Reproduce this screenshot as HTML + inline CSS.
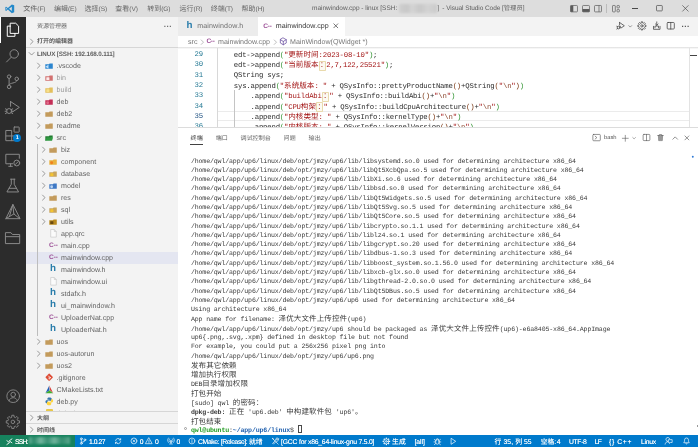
<!DOCTYPE html>
<html lang="zh-CN"><head><meta charset="utf-8"><title>mainwindow.cpp - linux - Visual Studio Code</title>
<style>
html,body{margin:0;padding:0}
body{text-rendering:geometricPrecision;width:698px;height:447px;overflow:hidden;position:relative;background:#fff;font-family:"Liberation Sans",sans-serif;font-size:7px}
#root{position:absolute;left:0;top:0;width:698px;height:447px;will-change:transform}
#root div,#root svg.a{position:absolute}
.t{white-space:nowrap}
span.cj{font-family:"Liberation Sans","Noto Sans CJK SC",sans-serif;letter-spacing:0;font-weight:normal}
span.cj.b{font-weight:bold}
span.cj.tc{letter-spacing:0.13px}
svg.a{overflow:visible;display:block}
.ln,.cl,.tm{font-family:"Liberation Mono",monospace;white-space:pre}
.ln,.cl{font-size:7.3px;letter-spacing:-0.191px;line-height:10.34px;height:10.34px;color:#2a2a2a}
.ln{text-align:right}
.tm{font-size:6.6px;letter-spacing:-0.145px;line-height:9.29px;height:9.29px;color:#3a3a3a}
.s{color:#a31515} .e{color:#8c4a32} .p2{color:#319331} .p3{color:#7b3814}
.u{position:relative;color:#a31515}
.u::after{content:'';position:absolute;left:0.2px;right:0.2px;top:-1.7px;height:10px;border:0.8px solid #e9daac;border-radius:0.8px;background:rgba(189,155,3,0.05);box-sizing:border-box}
</style></head><body>
<div id="root">
<div style="left:-6px;top:-6px;width:710px;height:22.5px;background:#dddddd"></div><svg class="a" style="left:5.4px;top:3.8px;" width="9.6" height="9.6" viewBox="0 0 100 100"><path d="M71 4 30 42 12 28 4 32v36l8 4 18-14 41 38 25-10V14z M12 60V40l10 10z M71 28v44L42 50z" fill="#2489ca" fill-rule="evenodd"/></svg><div class="t" style="left:23.3px;top:2.1px;height:16.5px;line-height:16.5px;font-size:6.8px;color:#666;letter-spacing:-0.1px"><span class="cj" style="font-size:7.0px">文件</span><span style="font-size:6.6px">(F)</span></div><div class="t" style="left:54px;top:2.1px;height:16.5px;line-height:16.5px;font-size:6.8px;color:#666;letter-spacing:-0.1px"><span class="cj" style="font-size:7.0px">编辑</span><span style="font-size:6.6px">(E)</span></div><div class="t" style="left:84.6px;top:2.1px;height:16.5px;line-height:16.5px;font-size:6.8px;color:#666;letter-spacing:-0.1px"><span class="cj" style="font-size:7.0px">选择</span><span style="font-size:6.6px">(S)</span></div><div class="t" style="left:115.3px;top:2.1px;height:16.5px;line-height:16.5px;font-size:6.8px;color:#666;letter-spacing:-0.1px"><span class="cj" style="font-size:7.0px">查看</span><span style="font-size:6.6px">(V)</span></div><div class="t" style="left:147.2px;top:2.1px;height:16.5px;line-height:16.5px;font-size:6.8px;color:#666;letter-spacing:-0.1px"><span class="cj" style="font-size:7.0px">转到</span><span style="font-size:6.6px">(G)</span></div><div class="t" style="left:179.6px;top:2.1px;height:16.5px;line-height:16.5px;font-size:6.8px;color:#666;letter-spacing:-0.1px"><span class="cj" style="font-size:7.0px">运行</span><span style="font-size:6.6px">(R)</span></div><div class="t" style="left:210.8px;top:2.1px;height:16.5px;line-height:16.5px;font-size:6.8px;color:#666;letter-spacing:-0.1px"><span class="cj" style="font-size:7.0px">终端</span><span style="font-size:6.6px">(T)</span></div><div class="t" style="left:241.6px;top:2.1px;height:16.5px;line-height:16.5px;font-size:6.8px;color:#666;letter-spacing:-0.1px"><span class="cj" style="font-size:7.0px">帮助</span><span style="font-size:6.6px">(H)</span></div><div class="t" style="left:312px;top:1.0px;height:16.5px;line-height:16.5px;font-size:6.5px;color:#606060;letter-spacing:-0.015px">mainwindow.cpp - linux [SSH:</div><div class="t" style="left:437.4px;top:1.0px;height:16.5px;line-height:16.5px;font-size:6.5px;color:#606060">]</div><div class="t" style="left:442.3px;top:1.0px;height:16.5px;line-height:16.5px;font-size:6.5px;color:#606060;letter-spacing:-0.057px">- Visual Studio Code [<span class="cj" style="font-size:6.3px">管理员</span>]</div><div style="left:399px;top:4px;width:37.5px;height:8.5px;background:linear-gradient(90deg,#cfcfcf,#c6c6c6 20%,#d3d3d3 35%,#c7c7c7 55%,#d2d2d2 75%,#cacaca);filter:blur(1.2px);opacity:.9"></div><svg class="a" style="left:570px;top:4.6px;" width="8" height="7.4" viewBox="0 0 8 7.400"><rect x="0.500" y="0.500" width="7" height="6.400" rx="0.800" fill="none" stroke="#5a5a5a" stroke-width="0.700"/><rect x="0.500" y="0.500" width="2.800" height="6.400" fill="#5a5a5a"/></svg><svg class="a" style="left:582px;top:4.6px;" width="8" height="7.4" viewBox="0 0 8 7.400"><rect x="0.500" y="0.500" width="7" height="6.400" rx="0.800" fill="none" stroke="#5a5a5a" stroke-width="0.700"/><rect x="0.500" y="4" width="7" height="2.900" fill="#5a5a5a"/></svg><svg class="a" style="left:594px;top:4.6px;" width="8" height="7.4" viewBox="0 0 8 7.400"><rect x="0.500" y="0.500" width="7" height="6.400" rx="0.800" fill="none" stroke="#5a5a5a" stroke-width="0.700"/><line x1="5" y1="0.500" x2="5" y2="6.900" stroke="#5a5a5a" stroke-width="0.700"/></svg><div style="left:606.3px;top:4px;width:0.6px;height:8.5px;background:#bcbcbc"></div><svg class="a" style="left:611.5px;top:4.6px;" width="8" height="7.4" viewBox="0 0 8 7.400"><g fill="none" stroke="#5a5a5a" stroke-width="0.700"><rect x="0.500" y="0.500" width="2.800" height="6.400" rx="0.600"/><rect x="5" y="0.500" width="2.400" height="2.400" rx="0.600"/><rect x="5" y="4.500" width="2.400" height="2.400" rx="0.600"/></g></svg><div style="left:632px;top:8.1px;width:5.8px;height:0.65px;background:#4a4a4a"></div><svg class="a" style="left:656.2px;top:5.2px;" width="6.8" height="6.4" viewBox="0 0 6.800 6.400"><rect x="0.500" y="0.500" width="5.800" height="5.400" rx="0.700" fill="none" stroke="#4a4a4a" stroke-width="0.700"/></svg><svg class="a" style="left:681.6px;top:5px;" width="6.8" height="6.8" viewBox="0 0 10 10"><path d="M0.500 0.500 9.500 9.500M9.500 0.500 0.500 9.500" stroke="#444" stroke-width="0.950" fill="none"/></svg><div style="left:-6px;top:16.5px;width:32px;height:418.0px;background:#2c2c2c"></div><div style="left:-6px;top:16.5px;width:7.1px;height:26px;background:#fff"></div><svg class="a" style="left:4.25px;top:20.55px;" width="17.5" height="17.5" viewBox="0 0 24 24"><g fill="none" stroke="#fff" stroke-width="1.35" stroke-linejoin="round" stroke-linecap="round"><path d="M9 3h7l4 4v10H9z"/><path d="M9 7H4.5v14H15v-4" /></g></svg><svg class="a" style="left:4.25px;top:46.55px;" width="17.5" height="17.5" viewBox="0 0 24 24"><g fill="none" stroke="#8a8a8a" stroke-width="1.35" stroke-linejoin="round" stroke-linecap="round"><circle cx="14" cy="9.5" r="5.8"/><path d="M10 14 3.5 20.5"/></g></svg><svg class="a" style="left:4.25px;top:72.55px;" width="17.5" height="17.5" viewBox="0 0 24 24"><g fill="none" stroke="#8a8a8a" stroke-width="1.35" stroke-linejoin="round" stroke-linecap="round"><circle cx="7" cy="5" r="2.4"/><circle cx="7" cy="19" r="2.4"/><circle cx="17.5" cy="8" r="2.4"/><path d="M7 7.5v9M17.5 10.5c0 4-10.5 2.5-10.5 6"/></g></svg><svg class="a" style="left:4.25px;top:98.55px;" width="17.5" height="17.5" viewBox="0 0 24 24"><g fill="none" stroke="#8a8a8a" stroke-width="1.35" stroke-linejoin="round" stroke-linecap="round"><path d="M9 3.5 21 11.5 12 17.5M9 3.5V10"/><circle cx="7" cy="16.5" r="3.4"/><path d="M2 13.5l2 1M2 20l2-1.2M12 13.5l-2 1M12 20l-2-1.2M3 16.8h-1.5M12.5 16.8H11"/></g></svg><svg class="a" style="left:4.25px;top:124.55000000000001px;" width="17.5" height="17.5" viewBox="0 0 24 24"><g fill="none" stroke="#8a8a8a" stroke-width="1.35" stroke-linejoin="round" stroke-linecap="round"><path d="M3 7.5h7.5V15H18v6.5H3z M10.5 15H3M10.5 15v6.5"/><rect x="13.8" y="2.8" width="7" height="7" rx="0.5"/></g></svg><div style="left:13.2px;top:134.3px;width:8.2px;height:8.2px;background:#007acc;border-radius:50%"></div><div class="t" style="left:13.2px;top:134.3px;height:8.2px;line-height:8.2px;font-size:5.6px;color:#fff;width:8.2px;text-align:center;font-weight:bold">1</div><svg class="a" style="left:4.25px;top:150.85px;" width="17.5" height="17.5" viewBox="0 0 24 24"><g fill="none" stroke="#8a8a8a" stroke-width="1.35" stroke-linejoin="round" stroke-linecap="round"><path d="M12 17.5H2.5v-13h18.5V10M6.5 21h5M9 17.5V21"/><circle cx="17.5" cy="16.5" r="4"/><path d="M15.5 18.5l4-4"/></g></svg><svg class="a" style="left:4.25px;top:176.75px;" width="17.5" height="17.5" viewBox="0 0 24 24"><g fill="none" stroke="#8a8a8a" stroke-width="1.35" stroke-linejoin="round" stroke-linecap="round"><path d="M9 3h6M10 3v7L4 20.5h16L14 10V3M7 15.5h10"/></g></svg><svg class="a" style="left:4.25px;top:202.75px;" width="17.5" height="17.5" viewBox="0 0 24 24"><g fill="none" stroke="#8a8a8a" stroke-width="1.35" stroke-linejoin="round" stroke-linecap="round"><path d="M12 2.5 2.5 21.5h19z M12 2.5l1.5 12.5 8 6.5M13.5 15 2.5 21.5 M12 2.5 7.5 18.5"/></g></svg><svg class="a" style="left:4.25px;top:229.25px;" width="17.5" height="17.5" viewBox="0 0 24 24"><g fill="none" stroke="#8a8a8a" stroke-width="1.35" stroke-linejoin="round" stroke-linecap="round"><path d="M2.5 5h7l2 2.5h10V20h-19z M2.5 10.5h19"/></g></svg><svg class="a" style="left:4.9px;top:387.8px;" width="16.4" height="16.4" viewBox="0 0 24 24"><g fill="none" stroke="#8a8a8a" stroke-width="1.35" stroke-linejoin="round" stroke-linecap="round"><circle cx="12" cy="12" r="9.3"/><circle cx="12" cy="9.6" r="3.4"/><path d="M5.800 18.800c1-3.300 3.700-4.600 6.200-4.600s5.200 1.300 6.200 4.600"/></g></svg><svg class="a" style="left:5.299999999999999px;top:414.3px;" width="15.8" height="15.8" viewBox="0 0 24 24"><g fill="none" stroke="#8a8a8a" stroke-width="1.35" stroke-linejoin="round" stroke-linecap="round"><path d="M10.17 4.62 L10.33 1.94 L13.67 1.94 L13.83 4.62 L15.92 5.49 L17.93 3.70 L20.30 6.07 L18.51 8.08 L19.38 10.17 L22.06 10.33 L22.06 13.67 L19.38 13.83 L18.51 15.92 L20.30 17.93 L17.93 20.30 L15.92 18.51 L13.83 19.38 L13.67 22.06 L10.33 22.06 L10.17 19.38 L8.08 18.51 L6.07 20.30 L3.70 17.93 L5.49 15.92 L4.62 13.83 L1.94 13.67 L1.94 10.33 L4.62 10.17 L5.49 8.08 L3.70 6.07 L6.07 3.70 L8.08 5.49z"/><circle cx="12" cy="12" r="2.7"/></g></svg><div style="left:26px;top:16.5px;width:152px;height:418.0px;background:#f3f3f3"></div><div class="t" style="left:37px;top:20.8px;height:12px;line-height:12px;color:#6a6a6a"><span class="cj" style="font-size:6.0px">资源管理器</span></div><div class="t" style="left:163.8px;top:20.8px;height:12px;line-height:12px;font-size:8px;color:#6a6a6a;letter-spacing:0.1px;font-weight:bold">···</div><svg class="a" style="left:27.7px;top:37.699999999999996px;" width="7.2" height="7.2" viewBox="0 0 8 8"><g fill="none" stroke="#777" stroke-width="0.8" stroke-linecap="round" stroke-linejoin="round"><path d="M2.800 1.200 5.600 4 2.800 6.800"/></g></svg><div class="t" style="left:37px;top:36.2px;height:12px;line-height:12px;color:#5a5a5a"><span class="cj b" style="font-size:6.0px">打开的编辑器</span></div><div style="left:26px;top:47.2px;width:152px;height:0.7px;background:#d6d6d6"></div><svg class="a" style="left:27.7px;top:50.199999999999996px;" width="7.2" height="7.2" viewBox="0 0 8 8"><g fill="none" stroke="#777" stroke-width="0.8" stroke-linecap="round" stroke-linejoin="round"><path d="M1.2 2.8 4 5.6 6.800 2.800"/></g></svg><div class="t" style="left:37px;top:49px;height:12px;line-height:12px;font-size:6.3px;font-weight:bold;color:#626262;letter-spacing:-0.14px">LINUX [SSH: 192.168.0.111]</div><div style="left:26px;top:251.5px;width:152px;height:12.0px;background:#e4e6f1"></div><div style="left:37.3px;top:143.5px;width:0.6px;height:192.0px;background:#bdbdbd"></div><svg class="a" style="left:35.199999999999996px;top:61.9px;" width="7.2" height="7.2" viewBox="0 0 8 8"><g fill="none" stroke="#777" stroke-width="0.8" stroke-linecap="round" stroke-linejoin="round"><path d="M2.800 1.200 5.600 4 2.800 6.800"/></g></svg><svg class="a" style="left:45.199999999999996px;top:62.75px;opacity:1" width="8.2" height="6.3" viewBox="0 0 8 6.150"><path d="M0.300 1.300h3.500l0.700-0.900h3.100v5.300H0.300z" fill="#2b85cf"/><path d="M0.300 3.600 3.400 1.600v4z" fill="#bfe0fa"/></svg><div class="t" style="left:56.5px;top:59.5px;height:12.0px;line-height:12.0px;font-size:7.1px;color:#636363">.vscode</div><svg class="a" style="left:35.199999999999996px;top:73.9px;" width="7.2" height="7.2" viewBox="0 0 8 8"><g fill="none" stroke="#777" stroke-width="0.8" stroke-linecap="round" stroke-linejoin="round"><path d="M2.800 1.200 5.600 4 2.800 6.800"/></g></svg><svg class="a" style="left:45.199999999999996px;top:74.75px;opacity:1" width="8.2" height="6.3" viewBox="0 0 8 6.150"><path d="M0.300 1.300h3.500l0.700-0.900h3.100v5.300H0.300z" fill="#d27170"/><rect x="1.300" y="2.300" width="3" height="2.700" rx="0.3" fill="#fbeaea"/></svg><div class="t" style="left:56.5px;top:71.5px;height:12.0px;line-height:12.0px;font-size:7.1px;color:#9c9c9c">bin</div><svg class="a" style="left:35.199999999999996px;top:85.9px;" width="7.2" height="7.2" viewBox="0 0 8 8"><g fill="none" stroke="#777" stroke-width="0.8" stroke-linecap="round" stroke-linejoin="round"><path d="M2.800 1.200 5.600 4 2.800 6.800"/></g></svg><svg class="a" style="left:45.199999999999996px;top:86.75px;opacity:1" width="8.2" height="6.3" viewBox="0 0 8 6.150"><path d="M0.300 1.300h3.500l0.700-0.900h3.100v5.300H0.300z" fill="#e3bf5c"/><rect x="1.300" y="2.300" width="3" height="2.700" rx="0.3" fill="#f7e08a"/></svg><div class="t" style="left:56.5px;top:83.5px;height:12.0px;line-height:12.0px;font-size:7.1px;color:#9c9c9c">build</div><svg class="a" style="left:35.199999999999996px;top:97.9px;" width="7.2" height="7.2" viewBox="0 0 8 8"><g fill="none" stroke="#777" stroke-width="0.8" stroke-linecap="round" stroke-linejoin="round"><path d="M2.800 1.200 5.600 4 2.800 6.800"/></g></svg><svg class="a" style="left:45.199999999999996px;top:98.75px;opacity:1" width="8.2" height="6.3" viewBox="0 0 8 6.150"><path d="M0.300 1.300h3.500l0.700-0.900h3.100v5.300H0.300z" fill="#c42f57"/><circle cx="2.600" cy="3.700" r="1.400" fill="#e06a88"/></svg><div class="t" style="left:56.5px;top:95.5px;height:12.0px;line-height:12.0px;font-size:7.1px;color:#636363">deb</div><svg class="a" style="left:35.199999999999996px;top:109.9px;" width="7.2" height="7.2" viewBox="0 0 8 8"><g fill="none" stroke="#777" stroke-width="0.8" stroke-linecap="round" stroke-linejoin="round"><path d="M2.800 1.200 5.600 4 2.800 6.800"/></g></svg><svg class="a" style="left:45.199999999999996px;top:110.75px;opacity:1" width="8.2" height="6.3" viewBox="0 0 8 6.150"><path d="M0.300 1.300h3.500l0.700-0.900h3.100v5.300H0.300z" fill="#c39b5c"/></svg><div class="t" style="left:56.5px;top:107.5px;height:12.0px;line-height:12.0px;font-size:7.1px;color:#636363">deb2</div><svg class="a" style="left:35.199999999999996px;top:121.9px;" width="7.2" height="7.2" viewBox="0 0 8 8"><g fill="none" stroke="#777" stroke-width="0.8" stroke-linecap="round" stroke-linejoin="round"><path d="M2.800 1.200 5.600 4 2.800 6.800"/></g></svg><svg class="a" style="left:45.199999999999996px;top:122.75px;opacity:1" width="8.2" height="6.3" viewBox="0 0 8 6.150"><path d="M0.300 1.300h3.500l0.700-0.900h3.100v5.300H0.300z" fill="#c39b5c"/></svg><div class="t" style="left:56.5px;top:119.5px;height:12.0px;line-height:12.0px;font-size:7.1px;color:#636363">readme</div><svg class="a" style="left:35.199999999999996px;top:133.9px;" width="7.2" height="7.2" viewBox="0 0 8 8"><g fill="none" stroke="#777" stroke-width="0.8" stroke-linecap="round" stroke-linejoin="round"><path d="M1.2 2.8 4 5.6 6.800 2.800"/></g></svg><svg class="a" style="left:45.199999999999996px;top:134.75px;opacity:1" width="8.2" height="6.3" viewBox="0 0 8 6.150"><path d="M0.300 5.700V1.300h3.400l0.700-0.900h3.100v1.800" fill="#217a31"/><path d="M0.300 5.700 1.500 2.100h6.400L6.900 5.700z" fill="#2f9a41"/></svg><div class="t" style="left:56.5px;top:131.5px;height:12.0px;line-height:12.0px;font-size:7.1px;color:#636363">src</div><svg class="a" style="left:39.5px;top:145.9px;" width="7.2" height="7.2" viewBox="0 0 8 8"><g fill="none" stroke="#777" stroke-width="0.8" stroke-linecap="round" stroke-linejoin="round"><path d="M2.800 1.200 5.600 4 2.800 6.800"/></g></svg><svg class="a" style="left:49.199999999999996px;top:146.75px;opacity:1" width="8.2" height="6.3" viewBox="0 0 8 6.150"><path d="M0.300 1.300h3.500l0.700-0.900h3.100v5.300H0.300z" fill="#c39b5c"/></svg><div class="t" style="left:61px;top:143.5px;height:12.0px;line-height:12.0px;font-size:7.1px;color:#636363">biz</div><svg class="a" style="left:39.5px;top:157.9px;" width="7.2" height="7.2" viewBox="0 0 8 8"><g fill="none" stroke="#777" stroke-width="0.8" stroke-linecap="round" stroke-linejoin="round"><path d="M2.800 1.200 5.600 4 2.800 6.800"/></g></svg><svg class="a" style="left:49.199999999999996px;top:158.75px;opacity:1" width="8.2" height="6.3" viewBox="0 0 8 6.150"><path d="M0.300 1.300h3.500l0.700-0.900h3.100v5.300H0.300z" fill="#e9b23f"/><circle cx="2.600" cy="3.700" r="1.400" fill="#f07f1c"/></svg><div class="t" style="left:61px;top:155.5px;height:12.0px;line-height:12.0px;font-size:7.1px;color:#636363">component</div><svg class="a" style="left:39.5px;top:169.9px;" width="7.2" height="7.2" viewBox="0 0 8 8"><g fill="none" stroke="#777" stroke-width="0.8" stroke-linecap="round" stroke-linejoin="round"><path d="M2.800 1.200 5.600 4 2.800 6.800"/></g></svg><svg class="a" style="left:49.199999999999996px;top:170.75px;opacity:1" width="8.2" height="6.3" viewBox="0 0 8 6.150"><path d="M0.300 1.300h3.500l0.700-0.900h3.100v5.300H0.300z" fill="#c9a55c"/><rect x="1.300" y="2.300" width="3" height="2.700" rx="0.3" fill="#f4c430"/></svg><div class="t" style="left:61px;top:167.5px;height:12.0px;line-height:12.0px;font-size:7.1px;color:#636363">database</div><svg class="a" style="left:39.5px;top:181.9px;" width="7.2" height="7.2" viewBox="0 0 8 8"><g fill="none" stroke="#777" stroke-width="0.8" stroke-linecap="round" stroke-linejoin="round"><path d="M2.800 1.200 5.600 4 2.800 6.800"/></g></svg><svg class="a" style="left:49.199999999999996px;top:182.75px;opacity:1" width="8.2" height="6.3" viewBox="0 0 8 6.150"><path d="M0.300 1.300h3.500l0.700-0.900h3.100v5.300H0.300z" fill="#3e78c4"/><circle cx="2.600" cy="3.700" r="1.400" fill="#b9d3f2"/></svg><div class="t" style="left:61px;top:179.5px;height:12.0px;line-height:12.0px;font-size:7.1px;color:#636363">model</div><svg class="a" style="left:39.5px;top:193.9px;" width="7.2" height="7.2" viewBox="0 0 8 8"><g fill="none" stroke="#777" stroke-width="0.8" stroke-linecap="round" stroke-linejoin="round"><path d="M2.800 1.200 5.600 4 2.800 6.800"/></g></svg><svg class="a" style="left:49.199999999999996px;top:194.75px;opacity:1" width="8.2" height="6.3" viewBox="0 0 8 6.150"><path d="M0.300 1.300h3.500l0.700-0.900h3.100v5.300H0.300z" fill="#c39b5c"/></svg><div class="t" style="left:61px;top:191.5px;height:12.0px;line-height:12.0px;font-size:7.1px;color:#636363">res</div><svg class="a" style="left:39.5px;top:205.9px;" width="7.2" height="7.2" viewBox="0 0 8 8"><g fill="none" stroke="#777" stroke-width="0.8" stroke-linecap="round" stroke-linejoin="round"><path d="M2.800 1.200 5.600 4 2.800 6.800"/></g></svg><svg class="a" style="left:49.199999999999996px;top:206.75px;opacity:1" width="8.2" height="6.3" viewBox="0 0 8 6.150"><path d="M0.300 1.300h3.500l0.700-0.900h3.100v5.300H0.300z" fill="#c9a55c"/><rect x="1.300" y="2.300" width="3" height="2.700" rx="0.3" fill="#f4c430"/></svg><div class="t" style="left:61px;top:203.5px;height:12.0px;line-height:12.0px;font-size:7.1px;color:#636363">sql</div><svg class="a" style="left:39.5px;top:217.9px;" width="7.2" height="7.2" viewBox="0 0 8 8"><g fill="none" stroke="#777" stroke-width="0.8" stroke-linecap="round" stroke-linejoin="round"><path d="M2.800 1.200 5.600 4 2.800 6.800"/></g></svg><svg class="a" style="left:49.199999999999996px;top:218.75px;opacity:1" width="8.2" height="6.3" viewBox="0 0 8 6.150"><path d="M0.300 1.300h3.500l0.700-0.900h3.100v5.300H0.300z" fill="#b98a1e"/><rect x="1.300" y="2.300" width="3" height="2.700" rx="0.3" fill="#6b4a10"/></svg><div class="t" style="left:61px;top:215.5px;height:12.0px;line-height:12.0px;font-size:7.1px;color:#636363">utils</div><svg class="a" style="left:49.599999999999994px;top:229.2px;" width="7" height="8.6" viewBox="0 0 7 8.6"><path d="M0.700 0.500h3.600l2 2v5.600H0.700z M4.300 0.500v2h2" fill="#fbfbfb" stroke="#c2c2c2" stroke-width="0.6"/></svg><div class="t" style="left:61px;top:227.5px;height:12.0px;line-height:12.0px;font-size:7.1px;color:#636363">app.qrc</div><div class="t" style="left:47.8px;top:240.4px;height:12px;line-height:12px;font-size:6.6px;font-weight:bold;color:#9b4f96;width:11px;text-align:center">C<svg width="3.700" height="2.600" viewBox="0 0 8.600 6" style="display:inline-block;vertical-align:0.08em;margin-left:0.2px;overflow:visible"><path d="M0.300 3h3.400M2 1.300v3.400M4.900 3h3.400M6.600 1.300v3.400" stroke="#9b4f96" stroke-width="1.25" fill="none"/></svg></div><div class="t" style="left:61px;top:239.5px;height:12.0px;line-height:12.0px;font-size:7.1px;color:#636363">main.cpp</div><div class="t" style="left:47.8px;top:252.4px;height:12px;line-height:12px;font-size:6.6px;font-weight:bold;color:#9b4f96;width:11px;text-align:center">C<svg width="3.700" height="2.600" viewBox="0 0 8.600 6" style="display:inline-block;vertical-align:0.08em;margin-left:0.2px;overflow:visible"><path d="M0.300 3h3.400M2 1.300v3.400M4.900 3h3.400M6.600 1.300v3.400" stroke="#9b4f96" stroke-width="1.25" fill="none"/></svg></div><div class="t" style="left:61px;top:251.5px;height:12.0px;line-height:12.0px;font-size:7.1px;color:#636363">mainwindow.cpp</div><div class="t" style="left:48.099999999999994px;top:263.3px;height:12px;line-height:12px;font-size:9.8px;font-weight:bold;color:#2a7dab;width:10px;text-align:center">h</div><div class="t" style="left:61px;top:263.5px;height:12.0px;line-height:12.0px;font-size:7.1px;color:#636363">mainwindow.h</div><svg class="a" style="left:49.599999999999994px;top:277.2px;" width="7" height="8.6" viewBox="0 0 7 8.6"><path d="M0.700 0.500h3.600l2 2v5.600H0.700z M4.300 0.500v2h2" fill="#fbfbfb" stroke="#c2c2c2" stroke-width="0.6"/></svg><div class="t" style="left:61px;top:275.5px;height:12.0px;line-height:12.0px;font-size:7.1px;color:#636363">mainwindow.ui</div><div class="t" style="left:48.099999999999994px;top:287.3px;height:12px;line-height:12px;font-size:9.8px;font-weight:bold;color:#2a7dab;width:10px;text-align:center">h</div><div class="t" style="left:61px;top:287.5px;height:12.0px;line-height:12.0px;font-size:7.1px;color:#636363">stdafx.h</div><div class="t" style="left:48.099999999999994px;top:299.3px;height:12px;line-height:12px;font-size:9.8px;font-weight:bold;color:#2a7dab;width:10px;text-align:center">h</div><div class="t" style="left:61px;top:299.5px;height:12.0px;line-height:12.0px;font-size:7.1px;color:#636363">ui_mainwindow.h</div><div class="t" style="left:47.8px;top:312.4px;height:12px;line-height:12px;font-size:6.6px;font-weight:bold;color:#9b4f96;width:11px;text-align:center">C<svg width="3.700" height="2.600" viewBox="0 0 8.600 6" style="display:inline-block;vertical-align:0.08em;margin-left:0.2px;overflow:visible"><path d="M0.300 3h3.400M2 1.300v3.400M4.900 3h3.400M6.600 1.300v3.400" stroke="#9b4f96" stroke-width="1.25" fill="none"/></svg></div><div class="t" style="left:61px;top:311.5px;height:12.0px;line-height:12.0px;font-size:7.1px;color:#636363">UploaderNat.cpp</div><div class="t" style="left:48.099999999999994px;top:323.3px;height:12px;line-height:12px;font-size:9.8px;font-weight:bold;color:#2a7dab;width:10px;text-align:center">h</div><div class="t" style="left:61px;top:323.5px;height:12.0px;line-height:12.0px;font-size:7.1px;color:#636363">UploaderNat.h</div><svg class="a" style="left:35.199999999999996px;top:337.9px;" width="7.2" height="7.2" viewBox="0 0 8 8"><g fill="none" stroke="#777" stroke-width="0.8" stroke-linecap="round" stroke-linejoin="round"><path d="M2.800 1.200 5.600 4 2.800 6.800"/></g></svg><svg class="a" style="left:45.199999999999996px;top:338.75px;opacity:1" width="8.2" height="6.3" viewBox="0 0 8 6.150"><path d="M0.300 1.300h3.500l0.700-0.900h3.100v5.300H0.300z" fill="#c39b5c"/></svg><div class="t" style="left:56.5px;top:335.5px;height:12.0px;line-height:12.0px;font-size:7.1px;color:#636363">uos</div><svg class="a" style="left:35.199999999999996px;top:349.9px;" width="7.2" height="7.2" viewBox="0 0 8 8"><g fill="none" stroke="#777" stroke-width="0.8" stroke-linecap="round" stroke-linejoin="round"><path d="M2.800 1.200 5.600 4 2.800 6.800"/></g></svg><svg class="a" style="left:45.199999999999996px;top:350.75px;opacity:1" width="8.2" height="6.3" viewBox="0 0 8 6.150"><path d="M0.300 1.300h3.500l0.700-0.900h3.100v5.300H0.300z" fill="#c39b5c"/></svg><div class="t" style="left:56.5px;top:347.5px;height:12.0px;line-height:12.0px;font-size:7.1px;color:#636363">uos-autorun</div><svg class="a" style="left:35.199999999999996px;top:361.9px;" width="7.2" height="7.2" viewBox="0 0 8 8"><g fill="none" stroke="#777" stroke-width="0.8" stroke-linecap="round" stroke-linejoin="round"><path d="M2.800 1.200 5.600 4 2.800 6.800"/></g></svg><svg class="a" style="left:45.199999999999996px;top:362.75px;opacity:1" width="8.2" height="6.3" viewBox="0 0 8 6.150"><path d="M0.300 1.300h3.500l0.700-0.900h3.100v5.300H0.300z" fill="#c39b5c"/></svg><div class="t" style="left:56.5px;top:359.5px;height:12.0px;line-height:12.0px;font-size:7.1px;color:#636363">uos2</div><svg class="a" style="left:45.099999999999994px;top:373.3px;" width="8.4" height="8.4" viewBox="0 0 10 10"><rect x="1.700" y="1.700" width="6.600" height="6.600" rx="0.8" transform="rotate(45 5 5)" fill="#dd4c35"/><path d="M3.800 3.200 6 5.400M5 4.400V7" stroke="#fff" stroke-width="0.8" fill="none"/><circle cx="5" cy="7" r="0.700" fill="#fff"/><circle cx="6.300" cy="5.600" r="0.700" fill="#fff"/></svg><div class="t" style="left:56.5px;top:371.5px;height:12.0px;line-height:12.0px;font-size:7.1px;color:#636363">.gitignore</div><svg class="a" style="left:45.0px;top:385.2px;" width="8.6" height="8.6" viewBox="0 0 10 10"><path d="M5 0.500 0.500 9.500 5.300 6z" fill="#1f5fb8"/><path d="M5 0.500 9.500 9.500 5.800 6.500z" fill="#d8322b"/><path d="M0.500 9.500h9L5.500 6.200z" fill="#3eae2b"/><path d="M5 0.500 5.600 6.400 9.500 9.500" fill="none" stroke="#ddd" stroke-width="0.4"/></svg><div class="t" style="left:56.5px;top:383.5px;height:12.0px;line-height:12.0px;font-size:7.1px;color:#636363">CMakeLists.txt</div><svg class="a" style="left:45.0px;top:397.2px;" width="8.6" height="8.6" viewBox="0 0 10 10"><path d="M4.900 0.500C3 0.500 2.800 1.300 2.800 2v1.200h2.300v0.500H1.900C1 3.700 0.500 4.500 0.500 5.500s0.500 1.800 1.400 1.800h0.900V6c0-0.900 0.800-1.600 1.700-1.600h2.100c0.700 0 1.200-0.500 1.200-1.200V2c0-0.800-0.700-1.500-2.900-1.500z" fill="#3776ab"/><path d="M5.100 9.500c1.900 0 2.100-0.800 2.100-1.500V6.800H4.900V6.300h3.200c0.900 0 1.400-0.800 1.400-1.800S9 2.700 8.100 2.700H7.200V4c0 0.900-0.800 1.600-1.700 1.600H3.400c-0.700 0-1.200 0.500-1.200 1.200V8c0 0.800 0.700 1.500 2.900 1.500z" fill="#ffd43b"/></svg><div class="t" style="left:56.5px;top:395.5px;height:12.0px;line-height:12.0px;font-size:7.1px;color:#636363">deb.py</div><div style="left:26px;top:411.2px;width:152px;height:24px;background:#f3f3f3"></div><div style="left:26px;top:411px;width:152px;height:0.7px;background:#d6d6d6"></div><svg class="a" style="left:27.7px;top:414.2px;" width="7.2" height="7.2" viewBox="0 0 8 8"><g fill="none" stroke="#777" stroke-width="0.8" stroke-linecap="round" stroke-linejoin="round"><path d="M2.800 1.200 5.600 4 2.800 6.800"/></g></svg><div class="t" style="left:37px;top:412.8px;height:12px;line-height:12px;color:#5a5a5a"><span class="cj b" style="font-size:6.0px">大纲</span></div><div style="left:26px;top:423.2px;width:152px;height:0.7px;background:#d6d6d6"></div><svg class="a" style="left:27.7px;top:426.2px;" width="7.2" height="7.2" viewBox="0 0 8 8"><g fill="none" stroke="#777" stroke-width="0.8" stroke-linecap="round" stroke-linejoin="round"><path d="M2.800 1.200 5.600 4 2.800 6.800"/></g></svg><div class="t" style="left:37px;top:424.8px;height:12px;line-height:12px;color:#5a5a5a"><span class="cj b" style="font-size:6.0px">时间线</span></div><div style="left:45.5px;top:408.6px;width:7px;height:2.4px;background:#e8c84a;border-radius:1px 1px 0 0"></div><div class="t" style="left:56.5px;top:407.5px;height:12px;line-height:12px;font-size:7.1px;color:#5c5c5c;height:3.5px;overflow:hidden">deb.sh</div><div style="left:178px;top:16.5px;width:526px;height:19px;background:#f3f3f3"></div><div style="left:178px;top:16.5px;width:79.5px;height:19px;background:#ececec"></div><div style="left:257.5px;top:16.5px;width:0.6px;height:19px;background:#f3f3f3"></div><div style="left:258px;top:16.5px;width:87px;height:19px;background:#fff"></div><div class="t" style="left:184.5px;top:20.0px;height:12px;line-height:12px;font-size:9.8px;font-weight:bold;color:#2a7dab;width:10px;text-align:center">h</div><div class="t" style="left:197.2px;top:17.2px;height:19px;line-height:19px;font-size:7.1px;color:#6f6f6f;letter-spacing:0.13px">mainwindow.h</div><div class="t" style="left:262.2px;top:21.1px;height:12px;line-height:12px;font-size:6.6px;font-weight:bold;color:#9b4f96;width:11px;text-align:center">C<svg width="3.700" height="2.600" viewBox="0 0 8.600 6" style="display:inline-block;vertical-align:0.08em;margin-left:0.2px;overflow:visible"><path d="M0.300 3h3.400M2 1.300v3.400M4.900 3h3.400M6.600 1.300v3.400" stroke="#9b4f96" stroke-width="1.25" fill="none"/></svg></div><div class="t" style="left:275.7px;top:17.2px;height:19px;line-height:19px;font-size:7.1px;color:#333;letter-spacing:0.08px">mainwindow.cpp</div><svg class="a" style="left:333.2px;top:23.3px;" width="5.6" height="5.6" viewBox="0 0 10 10"><path d="M1 1 9 9M9 1 1 9" stroke="#444" stroke-width="1.3" fill="none"/></svg><svg class="a" style="left:616.25px;top:21.25px;" width="9.5" height="9.5" viewBox="0 0 16 16"><g fill="none" stroke="#424242" stroke-width="1.3" stroke-linejoin="round" stroke-linecap="round"><path d="M6 2.500 14 8 8.500 11.800M6 2.500V7"/><circle cx="4.500" cy="11" r="2.300"/><path d="M1.300 9l1.400 0.700M1.300 13.500l1.400-0.800M7.700 9l-1.400 0.700"/></g></svg><svg class="a" style="left:627.15px;top:23.05px;" width="6.5" height="6.5" viewBox="0 0 16 16"><g fill="none" stroke="#424242" stroke-width="1.3" stroke-linejoin="round" stroke-linecap="round"><path d="M4.500 6.500 8 10 11.500 6.500"/></g></svg><svg class="a" style="left:637.4px;top:21.1px;" width="9.8" height="9.8" viewBox="0 0 16 16"><g fill="none" stroke="#424242" stroke-width="1.2" stroke-linejoin="round" stroke-linecap="round"><path d="M6.79 3.15 L6.88 1.29 L9.12 1.29 L9.21 3.15 L10.58 3.72 L11.95 2.47 L13.53 4.05 L12.28 5.42 L12.85 6.79 L14.71 6.88 L14.71 9.12 L12.85 9.21 L12.28 10.58 L13.53 11.95 L11.95 13.53 L10.58 12.28 L9.21 12.85 L9.12 14.71 L6.88 14.71 L6.79 12.85 L5.42 12.28 L4.05 13.53 L2.47 11.95 L3.72 10.58 L3.15 9.21 L1.29 9.12 L1.29 6.88 L3.15 6.79 L3.72 5.42 L2.47 4.05 L4.05 2.47 L5.42 3.72z"/><circle cx="8" cy="8" r="1.900"/></g></svg><svg class="a" style="left:651.75px;top:21.25px;" width="9.5" height="9.5" viewBox="0 0 16 16"><g fill="none" stroke="#424242" stroke-width="1.3" stroke-linejoin="round" stroke-linecap="round"><path d="M2.500 9v5h11V9M8 1.500V7M5.800 5 8 7.200 10.200 5"/><path d="M5 11.500V8.500h6v3" /></g></svg><svg class="a" style="left:665.85px;top:21.25px;" width="9.5" height="9.5" viewBox="0 0 16 16"><g fill="none" stroke="#424242" stroke-width="1.3" stroke-linejoin="round" stroke-linecap="round"><rect x="2" y="2.500" width="12" height="11" rx="1.500"/><path d="M8 2.500v11"/></g></svg><div class="t" style="left:681.6px;top:20.8px;height:12px;line-height:12px;font-size:8px;color:#505050;letter-spacing:0.1px;font-weight:bold">···</div><div style="left:178px;top:35.5px;width:526px;height:12px;background:#fff"></div><div class="t" style="left:188px;top:35.5px;height:12px;line-height:12px;font-size:7.1px;color:#767676">src</div><svg class="a" style="left:198.5px;top:38.599999999999994px;" width="6.4" height="6.4" viewBox="0 0 8 8"><g fill="none" stroke="#999" stroke-width="0.8" stroke-linecap="round" stroke-linejoin="round"><path d="M2.800 1.200 5.600 4 2.800 6.800"/></g></svg><div class="t" style="left:205.29999999999998px;top:36.4px;height:12px;line-height:12px;font-size:6.6px;font-weight:bold;color:#9b4f96;width:11px;text-align:center">C<svg width="3.700" height="2.600" viewBox="0 0 8.600 6" style="display:inline-block;vertical-align:0.08em;margin-left:0.2px;overflow:visible"><path d="M0.300 3h3.400M2 1.300v3.400M4.900 3h3.400M6.600 1.300v3.400" stroke="#9b4f96" stroke-width="1.25" fill="none"/></svg></div><div class="t" style="left:218px;top:35.5px;height:12px;line-height:12px;font-size:7.1px;color:#767676">mainwindow.cpp</div><svg class="a" style="left:272.2px;top:38.599999999999994px;" width="6.4" height="6.4" viewBox="0 0 8 8"><g fill="none" stroke="#999" stroke-width="0.8" stroke-linecap="round" stroke-linejoin="round"><path d="M2.800 1.200 5.600 4 2.800 6.800"/></g></svg><svg class="a" style="left:278.7px;top:37.300000000000004px;" width="8.6" height="8.6" viewBox="0 0 16 16"><g fill="none" stroke="#6a4fa0" stroke-width="1.4" stroke-linejoin="round" stroke-linecap="round"><path d="M8 1.800 13.500 5v6.200L8 14.400 2.500 11.200V5z M2.500 5 8 8.200 13.500 5M8 8.200v6.200"/></g></svg><div class="t" style="left:290px;top:35.5px;height:12px;line-height:12px;font-size:7.1px;color:#767676">MainWindow(QWidget *)</div><div style="left:178px;top:47.3px;width:526px;height:2.2px;background:linear-gradient(#dddddd,rgba(255,255,255,0))"></div><div style="left:178px;top:47.5px;width:520px;height:80.0px;overflow:hidden"><div style="left:39px;top:63.14px;width:472.5px;height:10.34px;border-top:1.1px solid #ebebeb;border-bottom:1.1px solid #ebebeb;box-sizing:border-box"></div><div style="left:39.099999999999994px;top:0px;width:0.6px;height:80.0px;background:#d8d8d8"></div><div style="left:55.65999999999998px;top:42.46000000000001px;width:1.0px;height:80.0px;background:#c4c4c4"></div><div class="ln" style="left:12px;top:2.5px;width:13px;color:#237893">29</div><div class="cl" style="left:39px;top:2.5px">    edt-&gt;append<span class="p2">(</span><span class="s">"<span class="cj" style="font-size:7.6px">更新时间</span>:2023-08-10"</span><span class="p2">)</span>;</div><div class="ln" style="left:12px;top:12.840000000000003px;width:13px;color:#237893">30</div><div class="cl" style="left:39px;top:12.840000000000003px">    edt-&gt;append<span class="p2">(</span><span class="s">"<span class="cj" style="font-size:7.6px">当前版本</span></span><span class="u"><span class="cj" style="font-size:7.6px;position:relative;left:1.5px">：</span></span><span class="s">2,7,122,25521"</span><span class="p2">)</span>;</div><div class="ln" style="left:12px;top:23.180000000000007px;width:13px;color:#237893">31</div><div class="cl" style="left:39px;top:23.180000000000007px">    QString sys;</div><div class="ln" style="left:12px;top:33.519999999999996px;width:13px;color:#237893">32</div><div class="cl" style="left:39px;top:33.519999999999996px">    sys.append<span class="p2">(</span><span class="s">"<span class="cj" style="font-size:7.6px">系统版本</span>: "</span> + QSysInfo::prettyProductName<span class="p3">()</span>+QString<span class="p3">(</span><span class="s">"</span><span class="e">\n</span><span class="s">"</span><span class="p3">)</span><span class="p2">)</span></div><div class="ln" style="left:12px;top:43.86px;width:13px;color:#237893">33</div><div class="cl" style="left:39px;top:43.86px">        .append<span class="p2">(</span><span class="s">"buildAbi</span><span class="u"><span class="cj" style="font-size:7.6px;position:relative;left:1.5px">：</span></span><span class="s">"</span> + QSysInfo::buildAbi<span class="p3">()</span>+<span class="s">"</span><span class="e">\n</span><span class="s">"</span><span class="p2">)</span></div><div class="ln" style="left:12px;top:54.2px;width:13px;color:#237893">34</div><div class="cl" style="left:39px;top:54.2px">        .append<span class="p2">(</span><span class="s">"CPU<span class="cj" style="font-size:7.6px">构架</span></span><span class="u"><span class="cj" style="font-size:7.6px;position:relative;left:1.5px">：</span></span><span class="s">"</span> + QSysInfo::buildCpuArchitecture<span class="p3">()</span>+<span class="s">"</span><span class="e">\n</span><span class="s">"</span><span class="p2">)</span></div><div class="ln" style="left:12px;top:64.53999999999999px;width:13px;color:#1d4f80">35</div><div class="cl" style="left:39px;top:64.53999999999999px">        .append<span class="p2">(</span><span class="s">"<span class="cj" style="font-size:7.6px">内核类型</span>: "</span> + QSysInfo::kernelType<span class="p3">()</span>+<span class="s">"</span><span class="e">\n</span><span class="s">"</span><span class="p2">)</span></div><div class="ln" style="left:12px;top:74.88px;width:13px;color:#237893">36</div><div class="cl" style="left:39px;top:74.88px">        .append<span class="p2">(</span><span class="s">"<span class="cj" style="font-size:7.6px">内核版本</span>: "</span> + QSysInfo::kernelVersion<span class="p3">()</span>+<span class="s">"</span><span class="e">\n</span><span class="s">"</span><span class="p2">)</span></div></div><div style="left:689.4px;top:47.5px;width:0.6px;height:80.0px;background:#e3e3e3"></div><div style="left:690.3px;top:55.2px;width:7.2px;height:1.1px;background:#444"></div><div style="left:178px;top:127.5px;width:526px;height:307.0px;background:#fff"></div><div style="left:178px;top:127.2px;width:526px;height:0.7px;background:#dcdcdc"></div><div class="t" style="left:190.6px;top:132.8px;height:12px;line-height:12px;color:#424242"><span class="cj" style="font-size:6.05px">终端</span></div><div class="t" style="left:215.8px;top:132.8px;height:12px;line-height:12px;color:#646464"><span class="cj" style="font-size:6.05px">端口</span></div><div class="t" style="left:240.6px;top:132.8px;height:12px;line-height:12px;color:#646464"><span class="cj" style="font-size:6.05px">调试控制台</span></div><div class="t" style="left:283.6px;top:132.8px;height:12px;line-height:12px;color:#646464"><span class="cj" style="font-size:6.05px">问题</span></div><div class="t" style="left:308.6px;top:132.8px;height:12px;line-height:12px;color:#646464"><span class="cj" style="font-size:6.05px">输出</span></div><div style="left:190.2px;top:144.4px;width:13px;height:0.8px;background:#424242"></div><svg class="a" style="left:591.9px;top:133.20000000000002px;" width="9.2" height="9.2" viewBox="0 0 16 16"><g fill="none" stroke="#555" stroke-width="1.1" stroke-linejoin="round" stroke-linecap="round"><rect x="1.500" y="2.500" width="13" height="11" rx="1.500"/><path d="M5.500 5.500 8.500 8 5.500 10.500"/></g></svg><div class="t" style="left:604px;top:131.8px;height:12px;line-height:12px;font-size:5.8px;color:#555">bash</div><svg class="a" style="left:620.7px;top:133.5px;" width="8.6" height="8.6" viewBox="0 0 16 16"><g fill="none" stroke="#555" stroke-width="1.1" stroke-linejoin="round" stroke-linecap="round"><path d="M8 2.500v11M2.500 8h11"/></g></svg><svg class="a" style="left:631.1999999999999px;top:135.00000000000003px;" width="6.2" height="6.2" viewBox="0 0 16 16"><g fill="none" stroke="#555" stroke-width="1.3" stroke-linejoin="round" stroke-linecap="round"><path d="M4.500 6.500 8 10 11.500 6.500"/></g></svg><svg class="a" style="left:642.4px;top:133.3px;" width="9" height="9" viewBox="0 0 16 16"><g fill="none" stroke="#555" stroke-width="1.1" stroke-linejoin="round" stroke-linecap="round"><rect x="2" y="2.500" width="12" height="11" rx="1.500"/><path d="M8 2.500v11"/></g></svg><svg class="a" style="left:656.0px;top:133.3px;" width="9" height="9" viewBox="0 0 16 16"><g fill="none" stroke="#555" stroke-width="1.1" stroke-linejoin="round" stroke-linecap="round"><path d="M3 4.500h10M6 4.500V2.800h4V4.500M4.300 4.500 4.800 13.500h6.400L11.700 4.500" /><path d="M6.600 6.500v5M9.400 6.500v5"/><path d="M5 5h6v8H5z" fill="#999" stroke="none"/></g></svg><svg class="a" style="left:671.0px;top:133.60000000000002px;" width="8.4" height="8.4" viewBox="0 0 16 16"><g fill="none" stroke="#555" stroke-width="1.2" stroke-linejoin="round" stroke-linecap="round"><path d="M3.500 10 8 5.500 12.500 10"/></g></svg><svg class="a" style="left:683.1px;top:133.9px;" width="7.8" height="7.8" viewBox="0 0 16 16"><g fill="none" stroke="#555" stroke-width="1.3" stroke-linejoin="round" stroke-linecap="round"><path d="M4 4 12 12M12 4 4 12"/></g></svg><svg class="a" style="left:691px;top:155px;" width="4" height="4" viewBox="0 0 4 4"><circle cx="1.800" cy="1.700" r="0.950" fill="#2f7ad6"/></svg><div class="tm" style="left:190.9px;top:156.5px">/home/qwl/app/up6/linux/deb/opt/jmzy/up6/lib/libsystemd.so.0 used for determining architecture x86_64</div><div class="tm" style="left:190.9px;top:165.79px">/home/qwl/app/up6/linux/deb/opt/jmzy/up6/lib/libQt5XcbQpa.so.5 used for determining architecture x86_64</div><div class="tm" style="left:190.9px;top:175.08px">/home/qwl/app/up6/linux/deb/opt/jmzy/up6/lib/libXi.so.6 used for determining architecture x86_64</div><div class="tm" style="left:190.9px;top:184.37px">/home/qwl/app/up6/linux/deb/opt/jmzy/up6/lib/libbsd.so.0 used for determining architecture x86_64</div><div class="tm" style="left:190.9px;top:193.66px">/home/qwl/app/up6/linux/deb/opt/jmzy/up6/lib/libQt5Widgets.so.5 used for determining architecture x86_64</div><div class="tm" style="left:190.9px;top:202.95px">/home/qwl/app/up6/linux/deb/opt/jmzy/up6/lib/libQt5Svg.so.5 used for determining architecture x86_64</div><div class="tm" style="left:190.9px;top:212.24px">/home/qwl/app/up6/linux/deb/opt/jmzy/up6/lib/libQt5Core.so.5 used for determining architecture x86_64</div><div class="tm" style="left:190.9px;top:221.53px">/home/qwl/app/up6/linux/deb/opt/jmzy/up6/lib/libcrypto.so.1.1 used for determining architecture x86_64</div><div class="tm" style="left:190.9px;top:230.82px">/home/qwl/app/up6/linux/deb/opt/jmzy/up6/lib/liblz4.so.1 used for determining architecture x86_64</div><div class="tm" style="left:190.9px;top:240.11px">/home/qwl/app/up6/linux/deb/opt/jmzy/up6/lib/libgcrypt.so.20 used for determining architecture x86_64</div><div class="tm" style="left:190.9px;top:249.4px">/home/qwl/app/up6/linux/deb/opt/jmzy/up6/lib/libdbus-1.so.3 used for determining architecture x86_64</div><div class="tm" style="left:190.9px;top:258.69px">/home/qwl/app/up6/linux/deb/opt/jmzy/up6/lib/libboost_system.so.1.56.0 used for determining architecture x86_64</div><div class="tm" style="left:190.9px;top:267.98px">/home/qwl/app/up6/linux/deb/opt/jmzy/up6/lib/libxcb-glx.so.0 used for determining architecture x86_64</div><div class="tm" style="left:190.9px;top:277.27px">/home/qwl/app/up6/linux/deb/opt/jmzy/up6/lib/libgthread-2.0.so.0 used for determining architecture x86_64</div><div class="tm" style="left:190.9px;top:286.56px">/home/qwl/app/up6/linux/deb/opt/jmzy/up6/lib/libQt5DBus.so.5 used for determining architecture x86_64</div><div class="tm" style="left:190.9px;top:295.85px">/home/qwl/app/up6/linux/deb/opt/jmzy/up6/up6 used for determining architecture x86_64</div><div class="tm" style="left:190.9px;top:305.14px">Using architecture x86_64</div><div class="tm" style="left:190.9px;top:314.43px">App name for filename: <span class="cj tc" style="font-size:7.5px">泽优大文件上传控件</span>(up6)</div><div class="tm" style="left:190.9px;top:323.72px">/home/qwl/app/up6/linux/deb/opt/jmzy/up6 should be packaged as <span class="cj tc" style="font-size:7.5px">泽优大文件上传控件</span>(up6)-e6a8405-x86_64.AppImage</div><div class="tm" style="left:190.9px;top:333.01px">up6{.png,.svg,.xpm} defined in desktop file but not found</div><div class="tm" style="left:190.9px;top:342.3px">For example, you could put a 256x256 pixel png into</div><div class="tm" style="left:190.9px;top:351.59px">/home/qwl/app/up6/linux/deb/opt/jmzy/up6/up6.png</div><div class="tm" style="left:190.9px;top:360.88px"><span class="cj tc" style="font-size:7.5px">发布其它依赖</span></div><div class="tm" style="left:190.9px;top:370.17px"><span class="cj tc" style="font-size:7.5px">增加执行权限</span></div><div class="tm" style="left:190.9px;top:379.46px">DEB<span class="cj tc" style="font-size:7.5px">目录增加权限</span></div><div class="tm" style="left:190.9px;top:388.75px"><span class="cj tc" style="font-size:7.5px">打包开始</span></div><div class="tm" style="left:190.9px;top:398.04px">[sudo] qwl <span class="cj tc" style="font-size:7.5px">的密码：</span></div><div class="tm" style="left:190.9px;top:407.33px"><b>dpkg-deb:</b> <span class="cj tc" style="font-size:7.5px">正在</span> 'up6.deb' <span class="cj tc" style="font-size:7.5px">中构建软件包</span> 'up6'<span class="cj tc" style="font-size:7.5px">。</span></div><div class="tm" style="left:190.9px;top:416.62px"><span class="cj tc" style="font-size:7.5px">打包结束</span></div><div class="tm" style="left:190.9px;top:425.91px"><b style="color:#1f9a1f">qwl@ubuntu</b>:<b style="color:#1f5fae">~/app/up6/linux</b>$ </div><div style="left:297.5px;top:425.1px;width:4.1px;height:8.2px;border:0.8px solid #4a4a4a;box-sizing:border-box"></div><div style="left:184px;top:427.2px;width:3px;height:3px;border:0.6px solid #9a9a9a;border-radius:50%;box-sizing:border-box"></div><div style="left:696.6px;top:425px;width:0.8px;height:2.4px;background:#999"></div><div style="left:-6px;top:434.5px;width:710px;height:18.5px;background:#007acc"></div><div style="left:-6px;top:434.5px;width:80.6px;height:18.5px;background:#16825d"></div><svg class="a" style="left:4.799999999999999px;top:436.8px;" width="8.8" height="8.8" viewBox="0 0 16 16"><g fill="none" stroke="#fff" stroke-width="1.6" stroke-linejoin="round" stroke-linecap="round"><path d="M3.400 6.700 8.300 10.200 3.400 13.700M12.600 3.500 7.700 7 12.600 10.500"/></g></svg><div class="t" style="left:15.1px;top:436.6px;height:12.3px;line-height:12.3px;font-size:6.8px;color:#fff;text-shadow:0 0 0.5px rgba(255,255,255,.75);letter-spacing:-0.868px;">SSH:</div><div style="left:29px;top:437.3px;width:41px;height:7.2px;background:linear-gradient(90deg,#6db39b,#2f8c6d 12%,#7dbba6 28%,#3d9377 45%,#79b9a3 62%,#358f71 80%,#62ab92);filter:blur(1px);opacity:.9"></div><svg class="a" style="left:78.5px;top:436.79999999999995px;" width="8.2" height="8.2" viewBox="0 0 16 16"><g fill="none" stroke="#fff" stroke-width="1.35" stroke-linejoin="round" stroke-linecap="round"><circle cx="4.500" cy="3.500" r="1.800"/><circle cx="4.500" cy="12.500" r="1.800"/><circle cx="11.500" cy="5.500" r="1.800"/><path d="M4.500 5.300v5.400M11.500 7.300c0 3-7 2-7 3.400"/></g></svg><div class="t" style="left:88.9px;top:436.6px;height:12.3px;line-height:12.3px;font-size:6.8px;color:#fff;text-shadow:0 0 0.5px rgba(255,255,255,.75);letter-spacing:-0.434px;">1.0.27</div><svg class="a" style="left:114.0px;top:436.79999999999995px;" width="8.2" height="8.2" viewBox="0 0 16 16"><g fill="none" stroke="#fff" stroke-width="1.3" stroke-linejoin="round" stroke-linecap="round"><path d="M3 7a5.200 5.200 0 0 1 9.600-1.500M13 9a5.200 5.200 0 0 1-9.600 1.500"/><path d="M13 3v2.800h-2.800M3 13v-2.800h2.800"/></g></svg><svg class="a" style="left:130.25px;top:436.95px;" width="7.9" height="7.9" viewBox="0 0 16 16"><g fill="none" stroke="#fff" stroke-width="1.35" stroke-linejoin="round" stroke-linecap="round"><circle cx="8" cy="8" r="6"/><path d="M5.700 5.700 10.300 10.300M10.300 5.700 5.700 10.300"/></g></svg><div class="t" style="left:139.7px;top:436.6px;height:12.3px;line-height:12.3px;font-size:6.8px;color:#fff;text-shadow:0 0 0.5px rgba(255,255,255,.75);">0</div><svg class="a" style="left:145.45000000000002px;top:436.95px;" width="7.9" height="7.9" viewBox="0 0 16 16"><g fill="none" stroke="#fff" stroke-width="1.35" stroke-linejoin="round" stroke-linecap="round"><path d="M8 2 14.500 13.500h-13z M8 6.500v3.500M8 11.700v0.200"/></g></svg><div class="t" style="left:154.9px;top:436.6px;height:12.3px;line-height:12.3px;font-size:6.8px;color:#fff;text-shadow:0 0 0.5px rgba(255,255,255,.75);">0</div><svg class="a" style="left:167.2px;top:436.9px;" width="8" height="8" viewBox="0 0 16 16"><g fill="none" stroke="#fff" stroke-width="1.15" stroke-linejoin="round" stroke-linecap="round"><path d="M8 6.500v8M5.800 14.500 8 6.500l2.200 8"/><path d="M5 9.300a4 4 0 0 1 0-5.600M11 9.300a4 4 0 0 0 0-5.600M2.600 11a7 7 0 0 1 0-9M13.400 11a7 7 0 0 0 0-9"/></g></svg><div class="t" style="left:176.4px;top:436.6px;height:12.3px;line-height:12.3px;font-size:6.8px;color:#fff;text-shadow:0 0 0.5px rgba(255,255,255,.75);">0</div><svg class="a" style="left:188.25px;top:436.95px;" width="7.9" height="7.9" viewBox="0 0 16 16"><g fill="none" stroke="#fff" stroke-width="1.35" stroke-linejoin="round" stroke-linecap="round"><circle cx="8" cy="8" r="6"/><path d="M8 7.300v3.700M8 4.800v0.300"/></g></svg><div class="t" style="left:198.1px;top:436.6px;height:12.3px;line-height:12.3px;font-size:6.8px;color:#fff;text-shadow:0 0 0.5px rgba(255,255,255,.75);letter-spacing:-0.39px;">CMake: [Release]: <span class="cj" style="font-size:6.8px">就绪</span></div><svg class="a" style="left:270.70000000000005px;top:436.5px;" width="8.8" height="8.8" viewBox="0 0 16 16"><g fill="none" stroke="#fff" stroke-width="1.2" stroke-linejoin="round" stroke-linecap="round"><path d="M3 3 7 7M2.500 2.500l1.500 0.300 0.300 1.500M13 13 8.500 8.500M13.500 3.500l-2 2-1.500-1.500 2-2a3 3 0 0 0-3.500 4L3 11.500 4.500 13l5.500-5.500a3 3 0 0 0 3.500-4z"/></g></svg><div class="t" style="left:281.1px;top:436.6px;height:12.3px;line-height:12.3px;font-size:6.8px;color:#fff;text-shadow:0 0 0.5px rgba(255,255,255,.75);letter-spacing:-0.206px;">[GCC for x86_64-linux-gnu 7.5.0]</div><svg class="a" style="left:382.40000000000003px;top:436.5px;" width="8.8" height="8.8" viewBox="0 0 16 16"><g fill="none" stroke="#fff" stroke-width="1.3" stroke-linejoin="round" stroke-linecap="round"><circle cx="8" cy="8" r="4.600"/><circle cx="8" cy="8" r="1.600"/><g stroke-width="2.200" stroke-linecap="butt"><path d="M8 1.200v2" transform="rotate(0 8 8)"/><path d="M8 1.200v2" transform="rotate(45 8 8)"/><path d="M8 1.200v2" transform="rotate(90 8 8)"/><path d="M8 1.200v2" transform="rotate(135 8 8)"/><path d="M8 1.200v2" transform="rotate(180 8 8)"/><path d="M8 1.200v2" transform="rotate(225 8 8)"/><path d="M8 1.200v2" transform="rotate(270 8 8)"/><path d="M8 1.200v2" transform="rotate(315 8 8)"/></g></g></svg><div class="t" style="left:392.1px;top:436.6px;height:12.3px;line-height:12.3px;font-size:6.8px;color:#fff;text-shadow:0 0 0.5px rgba(255,255,255,.75);"><span class="cj" style="font-size:6.8px">生成</span></div><div class="t" style="left:414.5px;top:436.6px;height:12.3px;line-height:12.3px;font-size:6.8px;color:#fff;text-shadow:0 0 0.5px rgba(255,255,255,.75);letter-spacing:-0.076px;">[all]</div><svg class="a" style="left:433.20000000000005px;top:436.5px;" width="8.8" height="8.8" viewBox="0 0 16 16"><g fill="none" stroke="#fff" stroke-width="1.2" stroke-linejoin="round" stroke-linecap="round"><ellipse cx="8" cy="9" rx="3.300" ry="4.200"/><path d="M5.500 5.500a2.500 2.500 0 0 1 5 0M1.800 9h2.900M11.300 9h2.900M2.500 4.500l2.500 2M13.500 4.500l-2.500 2M2.500 13.800l2.500-2M13.500 13.800l-2.500-2"/></g></svg><svg class="a" style="left:449.09999999999997px;top:436.59999999999997px;" width="8.6" height="8.6" viewBox="0 0 16 16"><g fill="none" stroke="#fff" stroke-width="1.3" stroke-linejoin="round" stroke-linecap="round"><path d="M4.500 2.800 12.500 8 4.500 13.200z"/></g></svg><div class="t" style="left:494.6px;top:436.6px;height:12.3px;line-height:12.3px;font-size:6.8px;color:#fff;text-shadow:0 0 0.5px rgba(255,255,255,.75);letter-spacing:0.102px;"><span class="cj" style="font-size:6.8px">行</span> 35, <span class="cj" style="font-size:6.8px">列</span> 55</div><div class="t" style="left:540.7px;top:436.6px;height:12.3px;line-height:12.3px;font-size:6.8px;color:#fff;text-shadow:0 0 0.5px rgba(255,255,255,.75);letter-spacing:-0.62px;"><span class="cj" style="font-size:6.8px">空格</span>: 4</div><div class="t" style="left:569px;top:436.6px;height:12.3px;line-height:12.3px;font-size:6.8px;color:#fff;text-shadow:0 0 0.5px rgba(255,255,255,.75);letter-spacing:-0.353px;">UTF-8</div><div class="t" style="left:594.7px;top:436.6px;height:12.3px;line-height:12.3px;font-size:6.8px;color:#fff;text-shadow:0 0 0.5px rgba(255,255,255,.75);letter-spacing:-0.818px;">LF</div><div class="t" style="left:609px;top:436.6px;height:12.3px;line-height:12.3px;font-size:6.8px;color:#fff;text-shadow:0 0 0.5px rgba(255,255,255,.75);letter-spacing:0.619px;">{} C++</div><div class="t" style="left:641px;top:436.6px;height:12.3px;line-height:12.3px;font-size:6.8px;color:#fff;text-shadow:0 0 0.5px rgba(255,255,255,.75);letter-spacing:-0.251px;">Linux</div><svg class="a" style="left:663.5px;top:436.4px;" width="9" height="9" viewBox="0 0 16 16"><g fill="none" stroke="#fff" stroke-width="1.2" stroke-linejoin="round" stroke-linecap="round"><path d="M6.500 9.500a3.500 3.500 0 1 1 3.500-5"/><path d="M2 14.500c0.500-3 2.500-4.500 4.500-4.500"/><path d="M8.500 6.500h6v5h-3l-1.800 1.800V11.500H8.500z"/></g></svg><svg class="a" style="left:681.5px;top:436.4px;" width="9" height="9" viewBox="0 0 16 16"><g fill="none" stroke="#fff" stroke-width="1.2" stroke-linejoin="round" stroke-linecap="round"><path d="M3.500 11.500c1-1 1-2.500 1-4.500a3.500 3.500 0 0 1 7 0c0 2 0 3.500 1 4.500z M6.800 13.500a1.300 1.300 0 0 0 2.400 0"/></g></svg>
</div>
</body></html>
